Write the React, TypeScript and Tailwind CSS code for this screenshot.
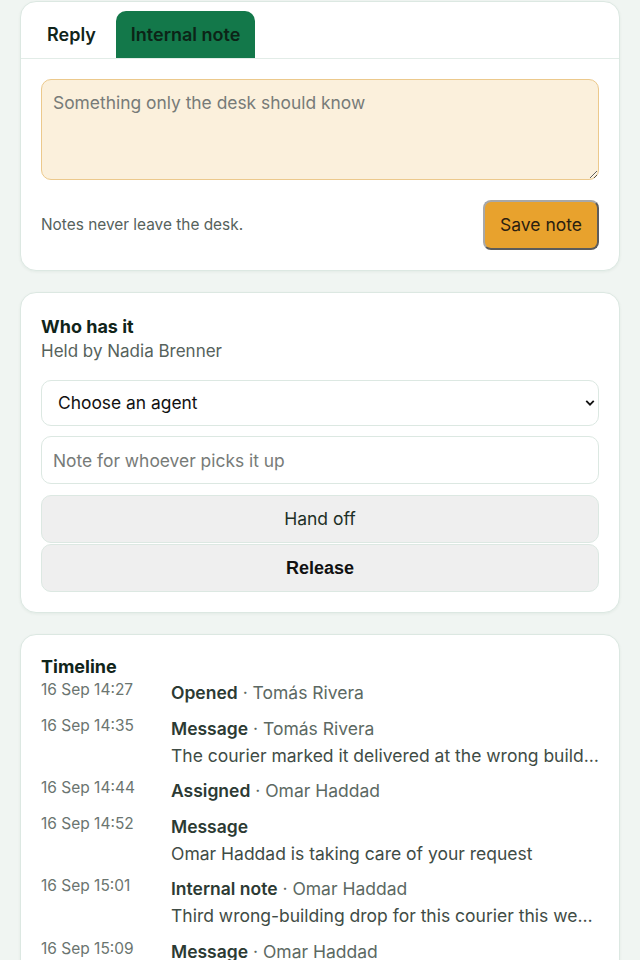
import { useState } from "react";

const TIMELINE = [
  { at: "16 Sep 14:27", kind: "Opened", who: "Tomás Rivera" },
  {
    at: "16 Sep 14:35",
    kind: "Message",
    who: "Tomás Rivera",
    body: "The courier marked it delivered at the wrong building, the one across the street, and nobody there signed for it.",
  },
  { at: "16 Sep 14:44", kind: "Assigned", who: "Omar Haddad" },
  {
    at: "16 Sep 14:52",
    kind: "Message",
    body: "Omar Haddad is taking care of your request",
  },
  {
    at: "16 Sep 15:01",
    kind: "Internal note",
    who: "Omar Haddad",
    body: "Third wrong-building drop for this courier this week, flagging it with the carrier account manager.",
  },
  {
    at: "16 Sep 15:09",
    kind: "Message",
    who: "Omar Haddad",
    body: "I've asked the courier to collect the parcel and bring it to your door today.",
  },
];

const card =
  "rounded-2xl border border-[#dce8e2] bg-white shadow-[0_1px_3px_rgba(20,60,40,0.06)]";

export default function App() {
  const [tab, setTab] = useState<"reply" | "note">("note");

  return (
    <div className="min-h-screen bg-[#f0f5f2] px-5 pt-px pb-10 font-['Inter',sans-serif] text-[#10241a]">
      <div className="flex flex-col gap-[21px]">
        <section className={card}>
          <div className="flex gap-[5px] border-b border-[#e2ece7] px-[11px] pt-[9px]">
            <button
              type="button"
              onClick={() => setTab("reply")}
              className={
                "h-[47px] rounded-t-[10px] px-[15px] text-[18px] font-semibold " +
                (tab === "reply" ? "bg-[#13784a] text-[#0c2417]" : "text-[#10241a]")
              }
            >
              Reply
            </button>
            <button
              type="button"
              onClick={() => setTab("note")}
              className={
                "h-[47px] rounded-t-[10px] px-[15px] text-[18px] font-semibold " +
                (tab === "note" ? "bg-[#13784a] text-[#0c2417]" : "text-[#10241a]")
              }
            >
              Internal note
            </button>
          </div>
          <div className="px-5 pt-5 pb-5">
            <textarea
              placeholder="Something only the desk should know"
              className="block h-[101px] w-full rounded-[10px] border border-[#ecc98c] bg-[#fbf0dc] px-[11px] py-[10px] text-[17.4px] text-[#10241a] placeholder:text-[#777b78] focus:outline-none"
            />
            <div className="mt-5 flex items-center justify-between">
              <p className="text-[15.4px] text-[#56625c]">Notes never leave the desk.</p>
              <button
                type="button"
                className="h-[50px] rounded-lg border-2 border-t-[#a8a8a8] border-l-[#a8a8a8] border-r-[#5c5c5c] border-b-[#5c5c5c] bg-[#e8a22d] px-[15px] text-[17.5px] text-[#2a2010]"
              >
                Save note
              </button>
            </div>
          </div>
        </section>

        <section className={card + " px-5 pt-[21px] pb-5"}>
          <h2 className="text-[18px] leading-[25px] font-bold">Who has it</h2>
          <p className="text-[17px] leading-[25px] text-[#56625c]">Held by Nadia Brenner</p>
          <div className="relative mt-4">
            <select className="block h-[46px] w-full appearance-none rounded-[10px] border border-[#dce8e2] bg-white px-4 text-[17.4px] text-[#111]">
              <option>Choose an agent</option>
              <option>Nadia Brenner</option>
              <option>Omar Haddad</option>
            </select>
            <svg
              viewBox="0 0 12 8"
              className="pointer-events-none absolute top-1/2 right-[4px] h-[7px] w-[10px] -translate-y-1/2"
              fill="none"
              stroke="#111"
              strokeWidth="2.2"
            >
              <path d="M1.5 1.5 6 6l4.5-4.5" />
            </svg>
          </div>
          <input
            placeholder="Note for whoever picks it up"
            className="mt-[10px] block h-[48px] w-full rounded-[10px] border border-[#dce8e2] bg-white px-[11px] text-[17.4px] placeholder:text-[#777b78] focus:outline-none"
          />
          <button
            type="button"
            className="mt-[11px] block h-[48px] w-full rounded-[10px] border border-[#dce8e2] bg-[#efefef] text-[17.5px] text-[#1e2f26]"
          >
            Hand off
          </button>
          <button
            type="button"
            className="mt-px block h-[48px] w-full rounded-[10px] border border-[#dce8e2] bg-[#efefef] font-['Liberation_Sans',Arial,sans-serif] text-[18px] font-bold text-[#111]"
          >
            Release
          </button>
        </section>

        <section className={card + " px-5 pt-[20px] pb-5"}>
          <h2 className="text-[18px] leading-[24px] font-bold">Timeline</h2>
          <ol className="flex flex-col gap-[8.5px]">
            {TIMELINE.map((item) => (
              <li key={item.at} className="flex">
                <span className="w-[130px] shrink-0 text-[15.5px] leading-[22px] text-[#6b7570]">
                  {item.at}
                </span>
                <div className="min-w-0 flex-1 text-[17.5px] leading-[27px]">
                  <p className="text-[#5c6963]">
                    <span className="font-semibold text-[#2c3a33]">{item.kind}</span>
                    {item.who ? <span> · {item.who}</span> : null}
                  </p>
                  {item.body ? <p className="truncate text-[#3f4c46]">{item.body}</p> : null}
                </div>
              </li>
            ))}
          </ol>
        </section>
      </div>
    </div>
  );
}
